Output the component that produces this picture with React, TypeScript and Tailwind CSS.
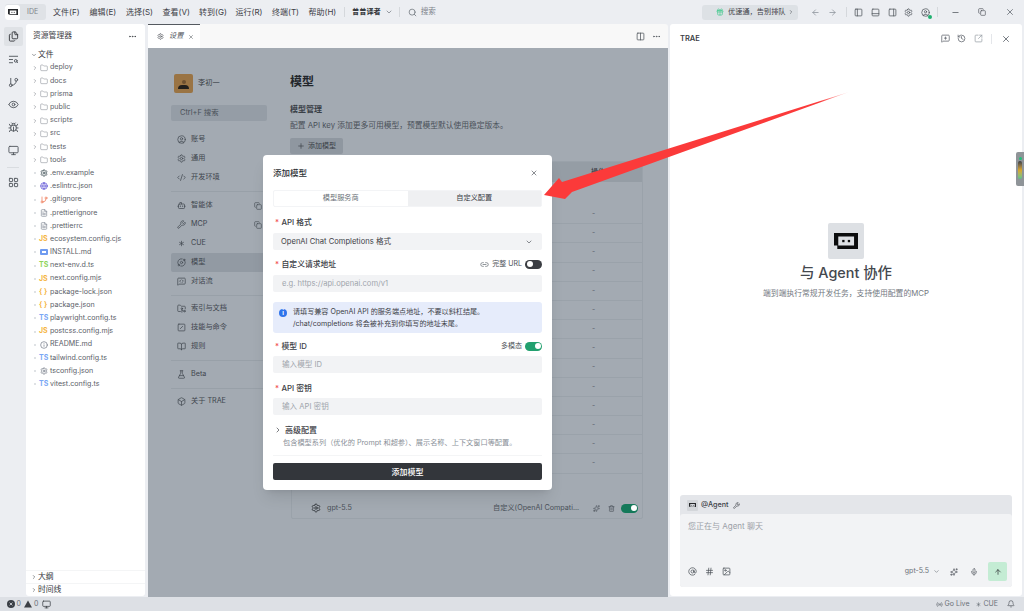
import {
  ArrowLeft, ArrowRight, ArrowUp, AtSign, Bell, BookOpen, Bot, Box, Bug, ChevronDown, ChevronRight, CircleUser,
  Code2, Columns2, Copy, Eye, FileText, Folder, FolderGit2, GitBranch, Hash, History, Image, Info, LayoutGrid, Link2, Mic, Minus, Monitor,
  MoreHorizontal, PanelBottom, PanelLeft, PanelRight, Plus, Search, Settings, SlashSquare, SquareArrowOutUpRight,
  Sparkles, TextSearch, Trash2, Wrench, X, FlaskConical, MessageSquarePlus, MessageSquareCode, Asterisk, Files, Gift, Globe, Radio, Orbit,
} from "lucide-react"

const font = { fontFamily: '"Inter", "Noto Sans CJK SC", sans-serif' }

const menus = ["文件(F)", "编辑(E)", "选择(S)", "查看(V)", "转到(G)", "运行(R)", "终端(T)", "帮助(H)"]

const folders = ["deploy", "docs", "prisma", "public", "scripts", "src", "tests", "tools"]

const files = [
  { name: ".env.example", badge: "gear" },
  { name: ".eslintrc.json", badge: "eslint" },
  { name: ".gitignore", badge: "git" },
  { name: ".prettierignore", badge: "file" },
  { name: ".prettierrc", badge: "file" },
  { name: "ecosystem.config.cjs", badge: "JS" },
  { name: "INSTALL.md", badge: "md" },
  { name: "next-env.d.ts", badge: "TSG" },
  { name: "next.config.mjs", badge: "JS" },
  { name: "package-lock.json", badge: "{}" },
  { name: "package.json", badge: "{}" },
  { name: "playwright.config.ts", badge: "TS" },
  { name: "postcss.config.mjs", badge: "JS" },
  { name: "README.md", badge: "info" },
  { name: "tailwind.config.ts", badge: "TS" },
  { name: "tsconfig.json", badge: "tsgear" },
  { name: "vitest.config.ts", badge: "TS" },
]

function TraeLogo({ className }: { className?: string }) {
  return (
    <svg viewBox="0 0 73 51" className={className} fill="currentColor">
      <path fillRule="evenodd" d="M0 0H73V51H10V38H0ZM13 11V38H61V11Z" />
      <rect x="25" y="21" width="7" height="7" />
      <rect x="42" y="21" width="7" height="7" />
    </svg>
  )
}

function FileBadge({ badge }: { badge: string }) {
  if (badge === "JS") return <span className="w-[9px] text-[7px] font-bold text-[#f5b642]">JS</span>
  if (badge === "TS") return <span className="w-[9px] text-[7px] font-bold text-[#7aa7f5]">TS</span>
  if (badge === "TSG") return <span className="w-[9px] text-[7px] font-bold text-[#8fd45c]">TS</span>
  if (badge === "{}") return <span className="w-[9px] text-[7px] font-bold text-[#f5b642]">{"{ }"}</span>
  if (badge === "gear") return <Settings size={8} strokeWidth={3} className="text-[#5d6b70]" />
  if (badge === "eslint") return <Globe size={8} strokeWidth={2.4} className="text-[#6a5fd8]" />
  if (badge === "git") return <GitBranch size={8} strokeWidth={2.2} className="text-[#ee7d5b]" />
  if (badge === "md") return <div className="flex h-[6px] w-[8px] items-center justify-center rounded-[1px] bg-[#6f9bf0]"><div className="h-[2px] w-[4px] bg-white" /></div>
  if (badge === "info") return <Info size={8} className="text-[#6b7280]" />
  if (badge === "tsgear") return <Settings size={8} className="text-[#6b7280]" />
  return <FileText size={8} className="text-[#808894]" />
}

function Toggle({ on, dim }: { on: boolean; dim?: boolean }) {
  return (
    <div className={`flex h-[9px] w-[17px] items-center rounded-full px-[1.5px] ${on ? (dim ? "justify-end bg-[#14795a]" : "justify-end bg-[#22a06f]") : "justify-start bg-[#3a3d42]"}`}>
      <div className="h-[6px] w-[6px] rounded-full bg-white" />
    </div>
  )
}

function Field({ label, right, children, tight }: { label: string; right?: React.ReactNode; children: React.ReactNode; tight?: boolean }) {
  return (
    <div>
      <div className={`flex h-3 items-center justify-between ${tight ? "mb-[4px]" : "mb-[5px]"}`}>
        <div className="flex items-center pt-px text-[7.8px] font-medium text-[#3c4046]">
          <span className="ml-[2px] mr-[2.5px] text-[#f04b4b]">*</span>
          {label}
        </div>
        {right}
      </div>
      <div className="flex h-[17px] items-center justify-between rounded-[2px] bg-[#f2f3f5] px-[9px] text-[7.6px] text-[#a0a5ac]">
        {children}
      </div>
    </div>
  )
}

function NavItem({ icon, label, active, extra }: { icon: React.ReactNode; label: string; active?: boolean; extra?: boolean }) {
  return (
    <div className={`relative flex h-[19px] items-center gap-[5px] rounded-l-[2px] pl-[6px] text-[7.2px] text-[#3f464e] ${active ? "bg-[#929aa3]" : ""}`}>
      <div className="flex w-[9px] justify-center text-[#454c54]">{icon}</div>
      {label}
      {extra && <Copy size={8} className="absolute right-[5px] text-[#4a5159]" />}
    </div>
  )
}

function Settingspane() {
  const dashes = Array.from({ length: 14 })
  return (
    <div className="flex min-h-0 flex-1 bg-[#a3aab2] pl-[23px]">
      <div className="w-[96px] shrink-0 pt-[26px]">
        <div className="ml-[3px] flex items-center gap-[5px]">
          <div className="flex h-[19px] w-[19px] flex-col items-center justify-end rounded-[2px] bg-[#9a7444] pb-[4px]">
            <div className="mb-px h-[4px] w-[4px] rounded-full bg-[#6d5030]" />
            <div className="h-[4px] w-[11px] rounded-t-full bg-[#221f1c]" />
          </div>
          <span className="text-[7.2px] text-[#363c43]">李初一</span>
        </div>
        <div className="mt-[12px] flex h-4 items-center rounded-[2px] bg-[#959da6] pl-[9px] text-[7.4px] text-[#4a5159]">Ctrl+F 搜索</div>
        <div className="mt-[9px]">
          <NavItem icon={<CircleUser size={9} />} label="账号" />
          <NavItem icon={<Settings size={9} />} label="通用" />
          <NavItem icon={<Code2 size={9} />} label="开发环境" />
          <div className="my-[4px] h-px bg-[#98a0a8]" />
          <NavItem icon={<Bot size={9} />} label="智能体" extra />
          <NavItem icon={<Wrench size={9} />} label="MCP" extra />
          <NavItem icon={<Asterisk size={9} />} label="CUE" />
          <NavItem icon={<Orbit size={9} />} label="模型" active />
          <NavItem icon={<MessageSquareCode size={9} />} label="对话流" />
          <div className="my-[3.5px] h-px bg-[#98a0a8]" />
          <NavItem icon={<FolderGit2 size={9} />} label="索引与文档" />
          <NavItem icon={<SlashSquare size={9} />} label="技能与命令" />
          <NavItem icon={<BookOpen size={9} />} label="规则" />
          <div className="my-[4px] h-px bg-[#98a0a8]" />
          <NavItem icon={<FlaskConical size={9} />} label="Beta" />
          <div className="my-[3.5px] h-px bg-[#98a0a8]" />
          <NavItem icon={<Box size={9} />} label="关于 TRAE" />
        </div>
      </div>
      <div className="ml-[23px] w-[353px] shrink-0 pt-[26px] text-[#3a4047]">
        <div className="text-[12px] font-semibold leading-4 text-[#22262b]">模型</div>
        <div className="mt-[13px] text-[8px] font-semibold leading-3">模型管理</div>
        <div className="mt-[4px] text-[7.75px] leading-3 text-[#4a5159]">配置 API key 添加更多可用模型，预置模型默认使用稳定版本。</div>
        <div className="mt-[7px] flex h-4 w-[53px] items-center justify-center gap-[3px] rounded-[2px] bg-[#8f97a0] text-[7px]">
          <Plus size={8} /> 添加模型
        </div>
        <div className="ml-px mt-[7px] rounded-[2px] border border-[#9aa2aa]">
          <div className="flex h-5 items-center bg-[#959da5] pl-[299px] text-[7.2px] font-medium">操作</div>
          <div className="h-[23px]" />
          {dashes.map((_, i) => (
            <div key={i} className="flex h-[19.2px] items-center border-b border-[#9aa2aa] pl-[300px] text-[7px] text-[#59606a]">-</div>
          ))}
          <div className="h-[25px]" />
          <div className="flex h-[19px] items-center pl-[19px] text-[7.2px] text-[#4a5159]">
            <Settings size={10} className="text-[#2d3136]" />
            <span className="ml-[6px] w-[166px]">gpt-5.5</span>
            <span className="w-[100px] whitespace-nowrap">自定义(OpenAI Compati...</span>
            <Sparkles size={7} />
            <Trash2 size={7} className="ml-[8px]" />
            <div className="ml-[6px]"><Toggle on dim /></div>
          </div>
        </div>
      </div>
    </div>
  )
}

function Modal() {
  return (
    <div className="absolute left-[263px] top-[155px] h-[335px] w-[289px] rounded-[4px] bg-white px-[10px] pt-3 shadow-lg" style={font}>
      <div className="mb-[11px] flex h-3 items-center justify-between">
        <span className="text-[8.5px] font-medium text-[#2d3136]">添加模型</span>
        <X size={8} className="mr-[4px] text-[#50555c]" />
      </div>
      <div className="mb-[9px] flex h-[17px] rounded-[2px] border border-[#f3f4f6] text-[7.2px]">
        <div className="flex flex-1 items-center justify-center text-[#6b7178]">模型服务商</div>
        <div className="flex flex-1 items-center justify-center bg-[#eff0f2] text-[#3c4046]">自定义配置</div>
      </div>
      <Field label="API 格式">
        <span className="-ml-px text-[#3c4046]">OpenAI Chat Completions 格式</span>
        <ChevronDown size={8} className="text-[#50555c]" />
      </Field>
      <div className="mt-2">
        <Field
          label="自定义请求地址"
          right={
            <div className="flex items-center gap-[3px] text-[7px] text-[#4b5057]">
              <Link2 size={9} className="text-[#6b7178]" /> 完整 URL <Toggle on={false} />
            </div>
          }
        >
          e.g. https://api.openai.com/v1
        </Field>
      </div>
      <div className="mt-[10px] flex h-[31px] items-start rounded-[3px] bg-[#e6ecfb] pl-[6px] pt-[4px] text-[7.1px] leading-[12px] text-[#3c4046]">
        <div className="mr-[6px] mt-[3px] flex h-[8px] w-[8px] shrink-0 items-center justify-center rounded-full bg-[#2f74eb] text-[6px] font-bold text-white">i</div>
        <div>
          请填写兼容 OpenAI API 的服务端点地址，不要以斜杠结尾。
          <br />
          /chat/completions 将会被补充到你填写的地址末尾。
        </div>
      </div>
      <div className="mt-[7px]">
        <Field
          tight
          label="模型 ID"
          right={
            <div className="flex items-center gap-[3px] text-[7px] text-[#4b5057]">
              多模态 <Toggle on />
            </div>
          }
        >
          输入模型 ID
        </Field>
      </div>
      <div className="mt-[9px]">
        <Field tight label="API 密钥">输入 API 密钥</Field>
      </div>
      <div className="mt-[9px] flex h-3 items-center text-[8px] font-medium text-[#3c4046]">
        <ChevronRight size={8} className="ml-px mr-[3px]" /> 高级配置
      </div>
      <div className="ml-[10px] mt-px text-[7.2px] leading-3 text-[#8a9098]">包含模型系列（优化的 Prompt 和超参）、展示名称、上下文窗口等配置。</div>
      <div className="mt-[6px] h-px bg-[#f4f5f6]" />
      <div className="mt-[7px] flex h-[17px] items-center justify-center rounded-[2px] bg-[#33363b] text-[8px] font-medium text-white">添加模型</div>
    </div>
  )
}

export default function App() {
  return (
    <div className="relative flex h-[611px] w-[1024px] flex-col overflow-hidden bg-[#eceef2] text-[#4b5057]" style={font}>
      {/* title bar */}
      <div className="flex h-6 shrink-0 items-center pr-[9px] text-[8px] text-[#3c4046]">
        <div className="ml-[5px] flex h-[16px] w-[41px] items-center rounded-[3px] bg-[#dfe2e6]">
          <div className="flex h-[15px] w-[15px] items-center justify-center rounded-[3px] bg-white">
            <TraeLogo className="w-[10px] text-[#26282b]" />
          </div>
          <span className="ml-[7px] text-[7px] text-[#7c828a]">IDE</span>
        </div>
        <div className="ml-[7px] flex gap-[10.5px]">
          {menus.map((m) => (
            <span key={m} className="w-[26px] whitespace-nowrap">{m}</span>
          ))}
        </div>
        <div className="ml-[9.5px] h-[10px] w-px bg-[#d5d8dc]" />
        <span className="ml-[7px] text-[7.2px] font-semibold text-[#33363b]">曾曾译者</span>
        <ChevronDown size={8} className="ml-[4px] text-[#6b7178]" />
        <div className="ml-[6px] h-[10px] w-px bg-[#d5d8dc]" />
        <Search size={9} className="ml-[8px] text-[#6b7178]" />
        <span className="ml-[4px] text-[7.5px] text-[#7c828a]">搜索</span>
        <div className="ml-auto flex h-[15px] w-[96px] items-center rounded-[3px] bg-[#dde1e5] pl-[14px] text-[7.2px] text-[#3c4046]">
          <Gift size={8} className="mr-[4px] text-[#3fc88d]" /> 优速通，告别排队
          <ChevronRight size={6} className="ml-[2px]" />
        </div>
        <ArrowLeft size={9} className="ml-[13px] text-[#8a9098]" />
        <ArrowRight size={9} className="ml-[8px] text-[#8a9098]" />
        <div className="ml-[9px] h-[10px] w-px bg-[#d5d8dc]" />
        <PanelLeft size={9} className="ml-[7px] text-[#50555c]" />
        <PanelBottom size={9} className="ml-[8px] text-[#50555c]" />
        <PanelRight size={9} className="ml-[8px] text-[#50555c]" />
        <Settings size={9} className="ml-[7px] text-[#50555c]" />
        <div className="relative ml-[8px]">
          <CircleUser size={9} className="text-[#50555c]" />
          <div className="absolute bottom-[-2px] right-[-2px] h-[4px] w-[4px] rounded-full bg-[#20b070]" />
        </div>
        <div className="ml-[7px] h-[10px] w-px bg-[#d5d8dc]" />
        <Minus size={9} className="ml-[12.5px] text-[#50555c]" />
        <Copy size={8} className="ml-[18.5px] text-[#50555c]" />
        <X size={10} className="ml-[19px] text-[#6b7178]" />
      </div>

      <div className="flex min-h-0 flex-1">
        {/* activity bar */}
        <div className="flex w-[26px] shrink-0 flex-col items-center pt-[3px] text-[#50555c]">
          <div className="flex h-[19px] w-[19px] items-center justify-center rounded-[2px] bg-[#dfe2e6] text-[#33363b]"><Files size={11} /></div>
          <div className="mt-[3.8px] flex h-[19px] items-center"><TextSearch size={11} /></div>
          <div className="mt-[3.8px] flex h-[19px] items-center"><GitBranch size={11} /></div>
          <div className="mt-[3.8px] flex h-[19px] items-center"><Eye size={11} /></div>
          <div className="mt-[3.8px] flex h-[19px] items-center"><Bug size={11} /></div>
          <div className="mt-[3.8px] flex h-[19px] items-center"><Monitor size={11} /></div>
          <div className="mt-[7px] h-px w-3 bg-[#d9dce0]" />
          <div className="mt-[5px] flex h-[19px] items-center"><LayoutGrid size={11} /></div>
        </div>

        {/* explorer */}
        <div className="mb-px flex w-[119px] shrink-0 flex-col rounded-[3px] bg-white">
          <div className="flex h-6 shrink-0 items-center justify-between pl-[7px] pr-2 text-[7.8px] text-[#3c4046]">
            资源管理器 <MoreHorizontal size={9} />
          </div>
          <div className="flex h-[13.2px] items-center pl-[5px] text-[7.8px] text-[#33363b]">
            <ChevronDown size={6} className="mr-[1px]" /> 文件
          </div>
          <div className="flex-1 text-[7.1px] text-[#5a6068]">
            {folders.map((f) => (
              <div key={f} className="flex h-[13.2px] items-center pl-[6px]">
                <ChevronRight size={6} className="mr-[2px] text-[#6b7178]" />
                <Folder size={8} strokeWidth={1.5} className="mr-[2px] text-[#7c828a]" />
                {f}
              </div>
            ))}
            {files.map((f) => (
              <div key={f.name} className="flex h-[13.2px] items-center pl-[8px]">
                <div className="mr-[3px] h-[2px] w-[2px] rounded-full bg-[#d5d8dc]" />
                <div className="mr-[2px] flex w-[9px] justify-center whitespace-nowrap"><FileBadge badge={f.badge} /></div>
                {f.name}
              </div>
            ))}
          </div>
          <div className="flex h-[13px] items-center border-t border-[#f4f5f6] pl-[5px] text-[7.8px] text-[#33363b]">
            <ChevronRight size={6} className="mr-[1px]" /> 大纲
          </div>
          <div className="flex h-[13px] items-center border-t border-[#f4f5f6] pl-[5px] text-[7.8px] text-[#33363b]">
            <ChevronRight size={6} className="mr-[1px]" /> 时间线
          </div>
        </div>

        {/* editor */}
        <div className="ml-[3px] flex w-[520px] shrink-0 flex-col rounded-t-[3px] bg-[#f8f8f8]">
          <div className="flex h-6 shrink-0 items-center justify-between pr-[7.5px]">
            <div className="flex h-6 w-[52px] items-center border-t border-[#555a60] bg-white pl-[9px] text-[7.2px] italic text-[#4b5057]">
              <Settings size={7} className="mr-[5px]" /> 设置 <X size={6} className="ml-[5px]" />
            </div>
            <div className="flex items-center gap-[6.5px] text-[#50555c]">
              <Columns2 size={9} />
              <MoreHorizontal size={9} />
            </div>
          </div>
          <Settingspane />
        </div>

        {/* agent panel */}
        <div className="mb-px ml-[2px] flex w-[352px] shrink-0 flex-col rounded-[3px] bg-white">
          <div className="flex h-[29px] shrink-0 items-center justify-between pl-[10px] pr-[11px]">
            <span className="text-[7.5px] font-semibold text-[#3c4046]">TRAE</span>
            <div className="flex items-center text-[#5d636b]">
              <MessageSquarePlus size={9} />
              <History size={9} className="ml-[7px]" />
              <SquareArrowOutUpRight size={9} className="ml-[8px] text-[#9aa0a7]" />
              <div className="ml-[8px] h-[10px] w-px bg-[#e4e6ea]" />
              <X size={10} className="ml-[9px]" />
            </div>
          </div>
          <div className="flex flex-1 flex-col items-center pt-[170px]">
            <div className="flex h-9 w-9 items-center justify-center rounded-[2px] bg-[#dde0e4]">
              <TraeLogo className="w-6 text-[#0c0d0e]" />
            </div>
            <div className="mt-[4px] text-[14.4px] font-medium leading-5 text-[#44484e]">与 Agent 协作</div>
            <div className="mt-[4px] text-[7.8px] leading-3 text-[#74797f]">端到端执行常规开发任务，支持使用配置的MCP</div>
          </div>
          <div className="mx-[10px] mb-[9px] flex h-[92px] shrink-0 flex-col rounded-[3px] bg-[#e4e6ea]">
            <div className="flex h-[19px] shrink-0 items-center pl-[7px] pt-px text-[7.2px] font-medium text-[#3c4046]">
              <div className="mr-[3px] flex h-[11px] w-[11px] items-center justify-center rounded-[1px] bg-[#d3d6da]">
                <TraeLogo className="w-[7px] text-[#26282b]" />
              </div>
              @Agent
              <Wrench size={7} className="ml-[4px]" />
            </div>
            <div className="flex flex-1 flex-col justify-between rounded-[3px] bg-[#f2f3f5] pb-[6px] pl-[8px] pr-[5px] pt-[7px]">
              <div className="text-[8px] leading-[10px] text-[#9aa0a7]">您正在与 Agent 聊天</div>
              <div className="flex items-center text-[#50555c]">
                <AtSign size={9} />
                <Hash size={9} className="ml-[8px]" />
                <Image size={9} className="ml-[8px]" />
                <span className="ml-auto text-[7px] text-[#6b7178]">gpt-5.5</span>
                <ChevronDown size={7} className="ml-[4px] text-[#6b7178]" />
                <Sparkles size={8} className="ml-[10px]" />
                <Mic size={8} className="ml-[12px]" />
                <div className="ml-[10px] flex h-[19px] w-[19px] items-center justify-center rounded-[2px] bg-[#c4ecd4] text-[#26282b]">
                  <ArrowUp size={8} />
                </div>
              </div>
            </div>
          </div>
        </div>
      </div>

      {/* status bar */}
      <div className="flex h-[14px] shrink-0 items-center bg-[#dde0e5] pl-[7px] pr-[9px] text-[7px] text-[#6b7178]">
        <svg viewBox="0 0 8 8" className="h-2 w-2 text-[#3c4046]">
          <circle cx="4" cy="4" r="4" fill="currentColor" />
          <path d="M2.6 2.6 5.4 5.4M5.4 2.6 2.6 5.4" stroke="#dde0e5" strokeWidth="0.8" />
        </svg>
        <span className="ml-[1.5px]">0</span>
        <svg viewBox="0 0 8 8" className="ml-[3.5px] h-2 w-2 text-[#3c4046]">
          <path d="M4 .5 8 7.5H0Z" fill="currentColor" />
        </svg>
        <span className="ml-[1.5px]">0</span>
        <Monitor size={9} className="ml-[3.5px] text-[#3c4046]" />
        <Radio size={7} className="ml-auto" />
        <span className="ml-[2px]">Go Live</span>
        <Asterisk size={7} className="ml-[6px]" />
        <span className="ml-px">CUE</span>
        <Bell size={8} className="ml-[9px] text-[#50555c]" />
      </div>

      <Modal />

      {/* red annotation arrow */}
      <svg className="pointer-events-none absolute left-0 top-0" width="1024" height="611">
        <defs>
          <linearGradient id="fade" x1="700" y1="0" x2="850" y2="0" gradientUnits="userSpaceOnUse">
            <stop offset="0" stopColor="#fb3a3a" />
            <stop offset="0.8" stopColor="#fb3a3a" />
            <stop offset="1" stopColor="#fb3a3a" stopOpacity="0.1" />
          </linearGradient>
        </defs>
        <polygon points="849,92 680,153 572,192 565,199 544,195 559,178 562,182 680,145" fill="url(#fade)" />
      </svg>

      {/* floating widget on the right edge */}
      <div className="absolute right-0 top-[152px] flex h-[34px] w-2 flex-col items-center rounded-l-[2px] bg-[#8f9498] pt-[5px]">
        <div className="h-[3px] w-[3px] rounded-full bg-[#22c07a]" />
        <div className="mt-[1px] h-[18px] w-[4px] rounded-full bg-gradient-to-b from-[#3c3f44] via-[#d9a526] to-[#4fc78a]" />
      </div>
    </div>
  )
}
